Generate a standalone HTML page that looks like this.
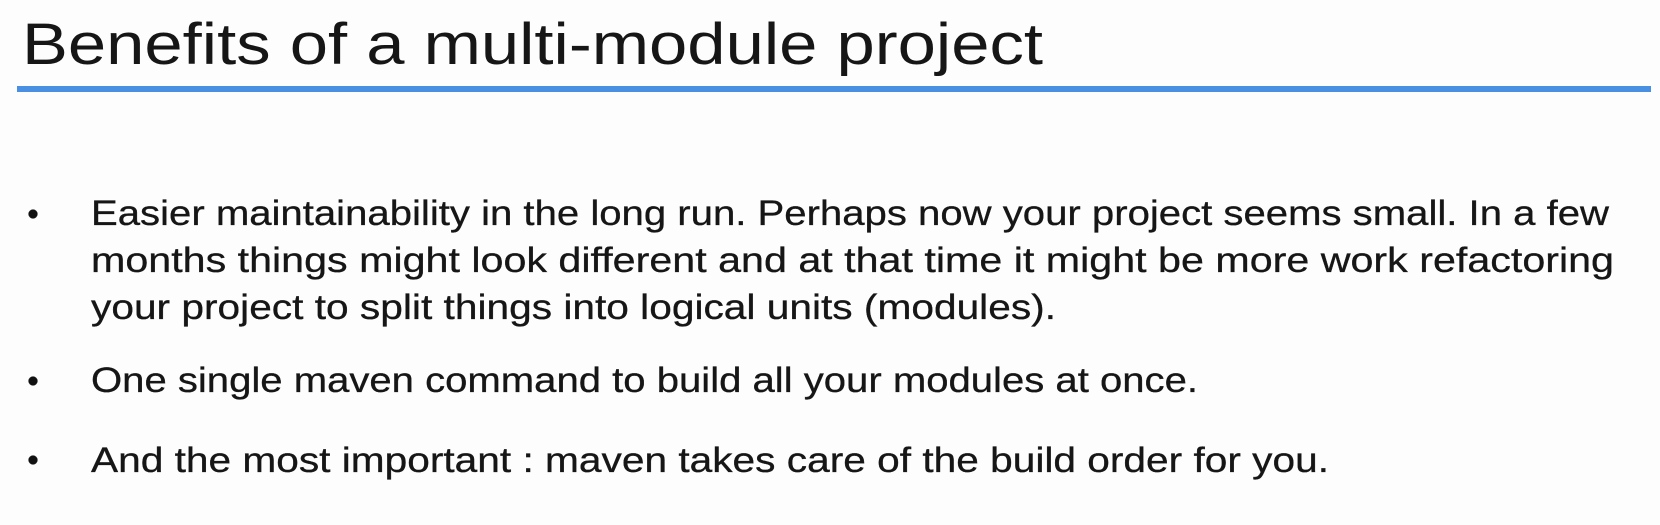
<!DOCTYPE html>
<html><head><meta charset="utf-8"><style>
html,body{margin:0;padding:0;background:#fdfdfd;width:1660px;height:525px;overflow:hidden}
svg{display:block}
text{font-family:"Liberation Sans",sans-serif;fill:#161616}
</style></head><body>
<svg width="1660" height="525" viewBox="0 0 1660 525">
<rect width="1660" height="525" fill="#fdfdfd"/>
<text x="22" y="64" font-size="58" textLength="1021" lengthAdjust="spacingAndGlyphs" fill="#111">Benefits of a multi-module project</text>
<rect x="17" y="86" width="1634" height="6" fill="#4a90e2"/>
<g font-size="35" stroke="#161616" stroke-width="0.3">
<circle cx="33" cy="214" r="4.5" fill="#111"/>
<text x="91" y="225" textLength="1518" lengthAdjust="spacingAndGlyphs">Easier maintainability in the long run. Perhaps now your project seems small. In a few</text>
<text x="91" y="272" textLength="1523" lengthAdjust="spacingAndGlyphs">months things might look different and at that time it might be more work refactoring</text>
<text x="91" y="319" textLength="965" lengthAdjust="spacingAndGlyphs">your project to split things into logical units (modules).</text>
<circle cx="33" cy="381" r="4.5" fill="#111"/>
<text x="91" y="392" textLength="1107" lengthAdjust="spacingAndGlyphs">One single maven command to build all your modules at once.</text>
<circle cx="33" cy="460" r="4.5" fill="#111"/>
<text x="91" y="472" textLength="1238" lengthAdjust="spacingAndGlyphs">And the most important : maven takes care of the build order for you.</text>
</g>
</svg>
</body></html>
